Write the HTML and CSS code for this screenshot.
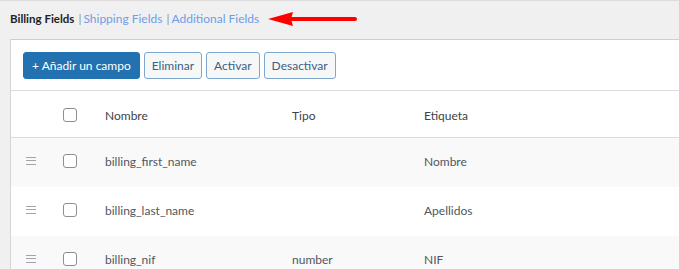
FILE: index.html
```html
<!DOCTYPE html>
<html lang="es">
<head>
  <meta charset="UTF-8" />
  <meta name="viewport" content="width=device-width, initial-scale=1.0"/>
  <title>Checkout Fields</title>
  <link rel="stylesheet" href="styles.css">
</head>
<body>

  <div class="tabs">
    <span class="tab current">Billing Fields</span>
    <span class="sep">|</span><a href="#" class="tab">Shipping Fields</a>
    <span class="sep">|</span><a href="#" class="tab">Additional Fields</a>
    <svg class="arrow" width="92" height="16" viewBox="0 0 92 16">
      <path d="M22 8 H88" stroke="#ff0000" stroke-width="4" stroke-linecap="round"/>
      <path d="M1 8 L26 1 L24 8 L26 15 Z" fill="#ff0000"/>
    </svg>
  </div>

  <div class="panel">
    <div class="toolbar">
      <button class="btn primary">+ Añadir un campo</button>
      <button class="btn">Eliminar</button>
      <button class="btn">Activar</button>
      <button class="btn">Desactivar</button>
    </div>

    <div class="fields">
      <div class="row head">
        <div class="cell"></div>
        <div class="cell"><span class="check"></span></div>
        <div class="cell">Nombre</div>
        <div class="cell">Tipo</div>
        <div class="cell">Etiqueta</div>
      </div>
      <div class="row alt">
        <div class="cell"><span class="handle"></span></div>
        <div class="cell"><span class="check"></span></div>
        <div class="cell">billing_first_name</div>
        <div class="cell"></div>
        <div class="cell">Nombre</div>
      </div>
      <div class="row">
        <div class="cell"><span class="handle"></span></div>
        <div class="cell"><span class="check"></span></div>
        <div class="cell">billing_last_name</div>
        <div class="cell"></div>
        <div class="cell">Apellidos</div>
      </div>
      <div class="row alt">
        <div class="cell"><span class="handle"></span></div>
        <div class="cell"><span class="check"></span></div>
        <div class="cell">billing_nif</div>
        <div class="cell">number</div>
        <div class="cell">NIF</div>
      </div>
    </div>
  </div>

</body>
</html>
```

FILE: styles.css
```css
body {
  margin: 0;
  font-family: Lato, "Noto Sans", sans-serif;
  font-size: 12px;
  background: #f0f0f0;
  color: #50575e;
  overflow: hidden;
}
.tabs {
  height: 34px;
  padding: 0 10px 4px;
  border-top: 1px solid #dcdcdc;
  display: flex;
  align-items: center;
  font-size: 12px;
}
.tab { color: #6f9de6; text-decoration: none; }
.tab.current { color: #1d2327; font-weight: bold; font-size: 11.5px; }
.sep { color: #8c8f94; margin: 0 2px 0 4px; }
.arrow { margin-left: 8px; margin-top: 1px; }

.panel {
  margin-left: 10px;
  background: #fff;
  border-top: 1px solid #cfcfcf;
  border-left: 1px solid #d5d5d5;
}
.toolbar {
  display: flex;
  gap: 4px;
  padding: 12px 12px 11px;
  border-bottom: 1px solid #dcdcde;
}
.btn {
  font-family: inherit;
  font-size: 12px;
  height: 27px;
  padding: 0 7px;
  background: #f6f7f7;
  color: #3b5f86;
  border: 1px solid #7ea7cf;
  border-radius: 3px;
}
.btn.primary {
  background: #2271b1;
  border-color: #2271b1;
  color: #fff;
  padding: 0 8px;
}

.row {
  display: grid;
  grid-template-columns: 52px 42px 187px 132px 1fr;
  height: 49px;
  align-items: center;
  background: #fff;
}
.row.head {
  height: 46px;
  border-bottom: 1px solid #dcdcde;
  color: #3c434a;
}
.row.alt { background: #f9f9f9; }
.cell { display: flex; align-items: center; padding-bottom: 3px; }
.row.head .cell { padding-bottom: 0; padding-top: 2px; }
.check {
  display: inline-block;
  width: 12px;
  height: 12px;
  border: 1px solid #8c8f94;
  border-radius: 3px;
  background: #fff;
}
.handle {
  display: inline-block;
  width: 10px;
  height: 6px;
  margin-left: 15px;
  border-top: 1px solid #a0a5aa;
  border-bottom: 1px solid #a0a5aa;
  position: relative;
}
.handle::after {
  content: "";
  position: absolute;
  left: 0;
  right: 0;
  top: 2px;
  border-top: 1px solid #a0a5aa;
}
```
